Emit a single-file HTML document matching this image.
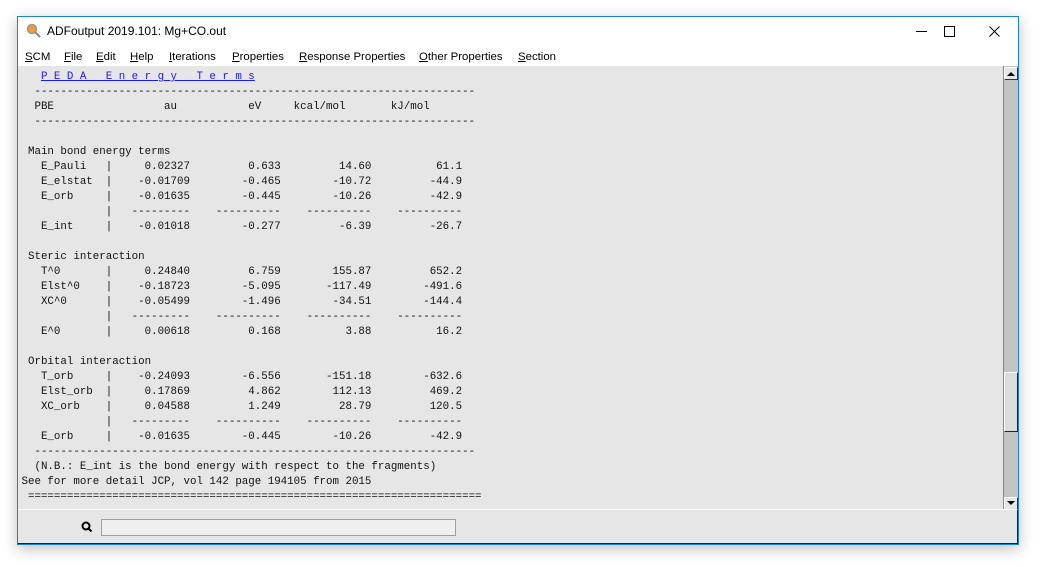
<!DOCTYPE html>
<html><head><style>
*{margin:0;padding:0;box-sizing:border-box}
body{width:1040px;height:567px;background:#fff;position:relative;overflow:hidden;font-family:"Liberation Sans",sans-serif}
.win{position:absolute;left:17px;top:16px;width:1002px;height:529px;border:1px solid #1883d7;background:#fff;box-shadow:0 4px 14px rgba(0,0,0,.25)}
.title{position:absolute;left:29px;top:7px;font-size:12px;color:#000}
.menu{position:absolute;top:34px;font-size:11.4px;color:#000}
.menu span{position:absolute;white-space:nowrap}
.content{position:absolute;left:0;top:49px;width:985px;height:443px;background:#e6e6e6;overflow:hidden}
pre{position:absolute;left:3.5px;top:4px;font-family:"Liberation Mono",monospace;font-size:10.8px;line-height:15px;color:#111}
pre a{color:#1a1aff;text-decoration:underline}
.sb{position:absolute;left:985px;top:49px;width:15px;height:445px;background:#c4c4c4;border-left:1px solid #888}
.btn{position:absolute;left:0;width:14px;height:13px;background:#e6e6e6;border:1px solid #333;border-top-color:#fff;border-left-color:#fff}
.thumb{position:absolute;left:0;top:306px;width:14px;height:60px;background:#dcdcdc;border:1px solid #222;border-top-color:#fff;border-left-color:#fff}
.bottom{position:absolute;left:0;top:492px;width:1000px;height:35px;background:#e6e6e6;border-top:1px solid #fff;border-bottom:1px solid #222;border-right:1px solid #222}
.inp{position:absolute;left:83px;top:9px;width:355px;height:17px;border:1px solid #a0a0a0;background:#efefef}
</style></head><body>
<div class="win">
<svg style="position:absolute;left:8px;top:6px" width="16" height="16" viewBox="0 0 16 16"><circle cx="6" cy="6" r="4.5" fill="#f39a3c" stroke="#999" stroke-width="1.5"/><line x1="9.5" y1="9.5" x2="14" y2="14" stroke="#888" stroke-width="2"/></svg>
<div class="title">ADFoutput 2019.101: Mg+CO.out</div>
<svg style="position:absolute;left:898px;top:14px" width="12" height="2"><rect width="11" height="1" fill="#000"/></svg>
<svg style="position:absolute;left:926px;top:9px" width="12" height="12"><rect x="0.5" y="0.5" width="10" height="10" fill="none" stroke="#000"/></svg>
<svg style="position:absolute;left:971px;top:9px" width="12" height="12"><path d="M0.5 0.5L10.5 10.5M10.5 0.5L0.5 10.5" stroke="#000"/></svg>
<div class="menu">
<span style="left:7px"><u>S</u>CM</span>
<span style="left:46px"><u>F</u>ile</span>
<span style="left:78px"><u>E</u>dit</span>
<span style="left:112px"><u>H</u>elp</span>
<span style="left:151px"><u>I</u>terations</span>
<span style="left:214px"><u>P</u>roperties</span>
<span style="left:281px"><u>R</u>esponse Properties</span>
<span style="left:401px"><u>O</u>ther Properties</span>
<span style="left:500px"><u>S</u>ection</span>
</div>
<div class="content"><pre>   <a>P E D A   E n e r g y   T e r m s</a>
  --------------------------------------------------------------------
  PBE                 au           eV     kcal/mol       kJ/mol
  --------------------------------------------------------------------

 Main bond energy terms
   E_Pauli   |     0.02327         0.633         14.60          61.1
   E_elstat  |    -0.01709        -0.465        -10.72         -44.9
   E_orb     |    -0.01635        -0.445        -10.26         -42.9
             |   ---------    ----------    ----------    ----------
   E_int     |    -0.01018        -0.277         -6.39         -26.7

 Steric interaction
   T^0       |     0.24840         6.759        155.87         652.2
   Elst^0    |    -0.18723        -5.095       -117.49        -491.6
   XC^0      |    -0.05499        -1.496        -34.51        -144.4
             |   ---------    ----------    ----------    ----------
   E^0       |     0.00618         0.168          3.88          16.2

 Orbital interaction
   T_orb     |    -0.24093        -6.556       -151.18        -632.6
   Elst_orb  |     0.17869         4.862        112.13         469.2
   XC_orb    |     0.04588         1.249         28.79         120.5
             |   ---------    ----------    ----------    ----------
   E_orb     |    -0.01635        -0.445        -10.26         -42.9
  --------------------------------------------------------------------
  (N.B.: E_int is the bond energy with respect to the fragments)
See for more detail JCP, vol 142 page 194105 from 2015
 ======================================================================</pre></div>
<div class="sb">
<div class="btn" style="top:1px"><svg width="12" height="11" style="position:absolute;left:0;top:0"><path d="M2 8L6 4L10 8Z" fill="#000"/></svg></div>
<div class="thumb"></div>
<div class="btn" style="top:431px"><svg width="12" height="11" style="position:absolute;left:0;top:0"><path d="M2 3L6 7L10 3Z" fill="#000"/></svg></div>
</div>
<div class="bottom">
<svg style="position:absolute;left:63px;top:11px" width="12" height="12"><circle cx="5" cy="5" r="3.5" fill="none" stroke="#000" stroke-width="2"/><line x1="7.5" y1="7.5" x2="10.5" y2="10.5" stroke="#000" stroke-width="2"/></svg>
<div class="inp"></div>
</div>
</div>
</body></html>
